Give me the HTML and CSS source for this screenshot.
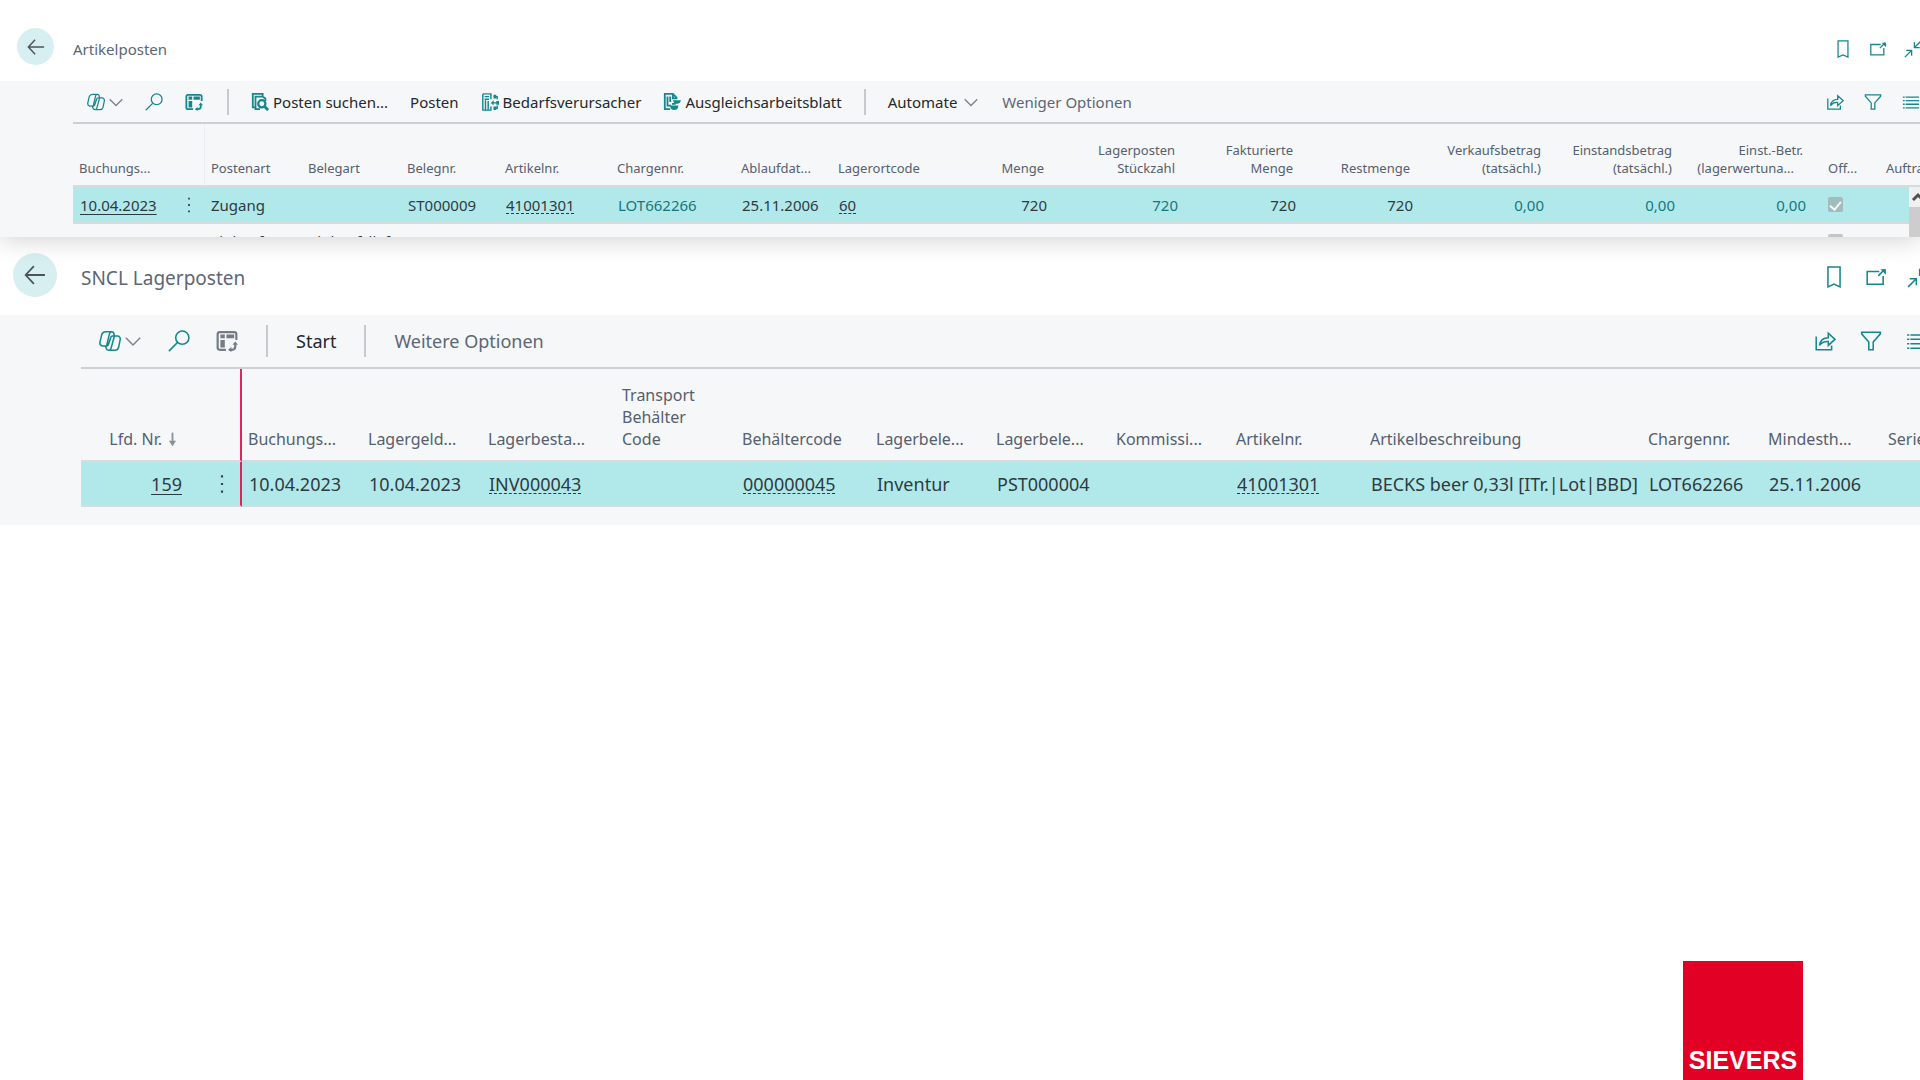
FILE: index.html
```html
<!DOCTYPE html>
<html lang="de">
<head>
<meta charset="utf-8">
<meta name="viewport" content="width=device-width, initial-scale=1">
<title>Artikelposten</title>
<link rel="stylesheet" href="styles.css">
</head>
<body>
<svg class="sprite" aria-hidden="true">
  <symbol id="i-back" viewBox="0 0 20 20"><path d="M19 10H2M9 2L1.500 10L9 18"/></symbol>
  <symbol id="i-copilot" viewBox="0 0 20 20"><path d="M6 1.500H11.500Q13.300 1.500 13.600 3.500L14 5.500H17Q19.800 6 19.200 9L17.800 16Q17 18.500 14.500 18.500H9Q7 18.500 6.500 16.500L6 14.500H3Q.4 14 .9 11L2.500 4Q3.500 1.500 6 1.500ZM14 5.500H12.500Q11 5.500 10.600 7L8.500 13.500Q8.200 14.500 7 14.500H6M11.500 1.500Q10 1.500 9.500 3.500L7 14M9 18.500Q10.500 18.500 11 16.500L14 5.500"/></symbol>
  <symbol id="i-chevron" viewBox="0 0 20 20"><path d="M1 6L10 15L19 6"/></symbol>
  <symbol id="i-search" viewBox="0 0 20 20"><circle cx="13" cy="7" r="6"/><path d="M8.500 11.500L.8 19.200"/></symbol>
  <symbol id="i-grid" viewBox="0 0 20 20"><path d="M18.500 9V4Q18.500 2 16.500 2H3.500Q1.500 2 1.500 4V16Q1.500 18 3.500 18H9M12 18H14.500Q17.500 18 17.500 15V13"/><path class="fill" d="M4 4H8V7.500H4ZM9.500 4H16.500V7.500H9.500ZM4 9H8V16H4ZM11 18L14 15.500V20ZM17.500 10.500L20 13.500H15Z"/></symbol>
  <symbol id="i-find" viewBox="0 0 20 20"><path stroke-width="2" d="M4 16H2V1H13V3M16 9V6L13 4H5V18H10"/><circle cx="12" cy="12" r="4" stroke-width="2.500"/><path stroke-width="3" d="M15 15L19 19"/></symbol>
  <symbol id="i-demand" viewBox="0 0 20 20"><path stroke-width="1.600" d="M2 1H11V7M2 1V19H11V15M5 8V19M8 9V19M4 4H9M4 7H9M12 11H18M14 4H18V7M14 17H18V14"/><path class="fill" d="M11 11L14 8V14ZM14 2H17V6H14ZM14 15H17V19H14ZM17 9H20V13H17Z"/></symbol>
  <symbol id="i-sheet" viewBox="0 0 20 20"><path stroke-width="2" d="M8 18H2V1H11L15 5V7M5 4V15M8 4V10M11 2V6H15M5 14H9"/><path class="fill" d="M11 8H20Q19 12 15.500 12Q12 12 11 8ZM8 14H17Q17 19 12.500 19Q8 19 8 14ZM10 11H14V13H10Z"/></symbol>
  <symbol id="i-bookmark" viewBox="0 0 20 20"><path d="M4.500 1H15.500V19L10 16.500L4.500 19Z"/></symbol>
  <symbol id="i-popout" viewBox="0 0 20 20"><path d="M13 5H2V16.500H16.500V9M12 9L18 3"/><path class="fill" d="M14 3H19V8Z"/></symbol>
  <symbol id="i-collapse" viewBox="0 0 20 20"><path d="M1 19L8 12M2.500 11.500H8.500V17.500M19 1L12 8M11.500 2.500V8.500H17.500"/></symbol>
  <symbol id="i-share" viewBox="0 0 20 20"><path d="M2 6V18H16V14M5 14Q6 7 13 7V3L19 8.500L13 14V10.500Q8 10 5 14Z"/></symbol>
  <symbol id="i-filter" viewBox="0 0 20 20"><path d="M1.500 2H18.500V3.500L12 11V18H8V11L1.500 3.500Z"/></symbol>
  <symbol id="i-list" viewBox="0 0 20 20"><path d="M1 4.500H3M4 4.500H19M1 8.500H3M4 8.500H19M1 12.500H3M4 12.500H19M1 16.500H3M4 16.500H19"/></symbol>
  <symbol id="i-dots" viewBox="0 0 20 20"><path class="fill" d="M9 2h2v2H9zM9 9h2v2H9zM9 16h2v2H9z"/></symbol>
  <symbol id="i-down" viewBox="0 0 10 20"><path stroke-width="2" d="M5 3V16"/><path class="fill" d="M1 12H9L5 18Z"/></symbol>
</svg>

<section class="panel panel-items">
  <header class="panel-head">
    <button class="back" aria-label="Zurück"><svg><use href="#i-back"/></svg></button>
    <h1>Artikelposten</h1>
    <div class="tools">
      <button aria-label="Lesezeichen"><svg><use href="#i-bookmark"/></svg></button>
      <button aria-label="In neuem Fenster öffnen"><svg><use href="#i-popout"/></svg></button>
      <button aria-label="Verkleinern"><svg><use href="#i-collapse"/></svg></button>
    </div>
  </header>
  <div class="panel-body">
    <div class="toolbar">
      <button class="copilot" aria-label="Copilot"><svg><use href="#i-copilot"/></svg><svg class="chevron"><use href="#i-chevron"/></svg></button>
      <button class="search" aria-label="Suchen"><svg><use href="#i-search"/></svg></button>
      <button class="grid" aria-label="Analyse"><svg><use href="#i-grid"/></svg></button>
      <span class="sep"></span>
      <button class="action"><svg><use href="#i-find"/></svg>Posten suchen...</button>
      <button class="action">Posten</button>
      <button class="action"><svg><use href="#i-demand"/></svg>Bedarfsverursacher</button>
      <button class="action"><svg><use href="#i-sheet"/></svg>Ausgleichsarbeitsblatt</button>
      <span class="sep"></span>
      <button class="action menu">Automate<svg class="chevron"><use href="#i-chevron"/></svg></button>
      <button class="action muted">Weniger Optionen</button>
      <div class="tools">
        <button aria-label="Teilen"><svg><use href="#i-share"/></svg></button>
        <button aria-label="Filter"><svg><use href="#i-filter"/></svg></button>
        <button aria-label="Liste"><svg><use href="#i-list"/></svg></button>
      </div>
    </div>
    <div class="list">
      <table>
        <colgroup>
          <col class="a1"><col class="a2"><col class="a3"><col class="a4"><col class="a3"><col class="a5"><col class="a6"><col class="a7"><col class="a8"><col class="a9"><col class="a10"><col class="a11"><col class="a12"><col class="a10"><col class="a10"><col class="a10"><col class="a13"><col>
        </colgroup>
        <thead>
          <tr>
            <th>Buchungs...</th><th></th><th class="divide">Postenart</th><th>Belegart</th><th>Belegnr.</th><th>Artikelnr.</th><th>Chargennr.</th><th>Ablaufdat...</th><th>Lagerortcode</th>
            <th class="num">Menge</th><th class="num">Lagerposten<br>Stückzahl</th><th class="num">Fakturierte<br>Menge</th><th class="num">Restmenge</th><th class="num">Verkaufsbetrag<br>(tatsächl.)</th><th class="num">Einstandsbetrag<br>(tatsächl.)</th><th class="num">Einst.-Betr.<br><span class="cut">(lagerwertuna...</span></th><th class="flag">Off...</th><th>Auftra</th>
          </tr>
        </thead>
        <tbody>
          <tr class="selected">
            <td><a class="key" href="#">10.04.2023</a></td><td class="more"><button aria-label="Weitere Optionen"><svg><use href="#i-dots"/></svg></button></td><td>Zugang</td><td></td><td>ST000009</td><td><a class="lookup" href="#">41001301</a></td><td><a class="drill" href="#">LOT662266</a></td><td>25.11.2006</td><td><a class="lookup" href="#">60</a></td>
            <td class="num">720</td><td class="num"><a class="drill" href="#">720</a></td><td class="num">720</td><td class="num">720</td><td class="num"><a class="drill" href="#">0,00</a></td><td class="num"><a class="drill" href="#">0,00</a></td><td class="num"><a class="drill" href="#">0,00</a></td><td class="flag"><input type="checkbox" checked disabled aria-label="Offen"></td><td></td>
          </tr>
          <tr class="next">
            <td></td><td></td><td>Einkauf</td><td>Einkaufslieferung</td><td></td><td></td><td></td><td></td><td></td><td></td><td></td><td></td><td></td><td></td><td></td><td></td><td class="flag"><input type="checkbox" checked disabled aria-label="Offen"></td><td></td>
          </tr>
        </tbody>
      </table>
      <div class="scrollbar"><svg viewBox="0 0 18 20"><path d="M4 13L9 8L14 13"/></svg><span class="thumb"></span></div>
    </div>
  </div>
</section>

<section class="panel panel-stock">
  <header class="panel-head">
    <button class="back" aria-label="Zurück"><svg><use href="#i-back"/></svg></button>
    <h1>SNCL Lagerposten</h1>
    <div class="tools">
      <button aria-label="Lesezeichen"><svg><use href="#i-bookmark"/></svg></button>
      <button aria-label="In neuem Fenster öffnen"><svg><use href="#i-popout"/></svg></button>
      <button aria-label="Verkleinern"><svg><use href="#i-collapse"/></svg></button>
    </div>
  </header>
  <div class="panel-body">
    <div class="toolbar">
      <button class="copilot" aria-label="Copilot"><svg><use href="#i-copilot"/></svg><svg class="chevron"><use href="#i-chevron"/></svg></button>
      <button class="search" aria-label="Suchen"><svg><use href="#i-search"/></svg></button>
      <button class="grid off" aria-label="Analyse"><svg><use href="#i-grid"/></svg></button>
      <span class="sep"></span>
      <button class="action">Start</button>
      <span class="sep"></span>
      <button class="action muted">Weitere Optionen</button>
      <div class="tools">
        <button aria-label="Teilen"><svg><use href="#i-share"/></svg></button>
        <button aria-label="Filter"><svg><use href="#i-filter"/></svg></button>
        <button aria-label="Liste"><svg><use href="#i-list"/></svg></button>
      </div>
    </div>
    <div class="list">
      <table>
        <colgroup>
          <col class="b1"><col class="b2"><col class="b3"><col class="b3"><col class="b4"><col class="b3"><col class="b4"><col class="b3"><col class="b3"><col class="b3"><col class="b4"><col class="b5"><col class="b3"><col class="b3"><col>
        </colgroup>
        <thead>
          <tr>
            <th class="num">Lfd. Nr.<svg class="sort"><use href="#i-down"/></svg></th><th class="freeze"></th><th>Buchungs...</th><th>Lagergeld...</th><th>Lagerbesta...</th><th>Transport<br>Behälter<br>Code</th><th>Behältercode</th><th>Lagerbele...</th><th>Lagerbele...</th><th>Kommissi...</th><th>Artikelnr.</th><th>Artikelbeschreibung</th><th>Chargennr.</th><th>Mindesth...</th><th>Serie</th>
          </tr>
        </thead>
        <tbody>
          <tr class="selected">
            <td class="num"><a class="key" href="#">159</a></td><td class="more freeze"><button aria-label="Weitere Optionen"><svg><use href="#i-dots"/></svg></button></td><td>10.04.2023</td><td>10.04.2023</td><td><a class="lookup" href="#">INV000043</a></td><td></td><td><a class="lookup" href="#">000000045</a></td><td>Inventur</td><td>PST000004</td><td></td><td><a class="lookup" href="#">41001301</a></td><td>BECKS beer 0,33l [ITr.|Lot|BBD]</td><td>LOT662266</td><td>25.11.2006</td><td></td>
          </tr>
        </tbody>
      </table>
    </div>
  </div>
</section>

<footer><div class="logo">SIEVERS</div></footer>
</body>
</html>
```
FILE: styles.css
```css
* { box-sizing: border-box; }

body {
  margin: 0;
  min-height: 100vh;
  display: flex;
  flex-direction: column;
  background: #fff;
  color: #2f3a40;
  font-family: "Noto Sans", "Open Sans", sans-serif;
  overflow-x: hidden;
}

.sprite { display: none; }

svg {
  display: block;
  flex: none;
  width: var(--icon);
  height: var(--icon);
  fill: none;
  stroke: currentColor;
  stroke-width: 1.4;
}
.fill { fill: currentColor; stroke: none; }

button {
  display: flex;
  align-items: center;
  margin: 0;
  padding: 0;
  border: 0;
  background: none;
  color: #16878d;
  font: inherit;
  white-space: nowrap;
}

/* Panels: the two pages share one layout and differ in scale */
.panel { overflow: hidden; font-size: var(--text); }

.panel-items {
  --icon: 18px;
  --title: 15px;
  --text: 15px;
  --label: 13px;
  --label-line: 18px;
  --indent: 73px;
  position: relative;
  z-index: 1;
  background: #fff;
  box-shadow: 0 0 26px rgba(0, 0, 0, .22);
}
.panel-stock {
  --icon: 22px;
  --title: 19px;
  --text: 18px;
  --label: 16px;
  --label-line: 22px;
  --indent: 81px;
}

.panel-head { display: flex; align-items: center; }
.panel-items .panel-head { padding: 28px 0 16px 17px; }
.panel-stock .panel-head { padding: 16px 0 18px 13px; }

.panel-head h1 {
  margin: 4px 0 0;
  color: #5c6675;
  font-size: var(--title);
  font-weight: 400;
  line-height: 24px;
}
.panel-stock h1 { margin-top: 6px; }

.back {
  justify-content: center;
  border-radius: 50%;
  background: #d8eff1;
  color: #4b5458;
}
.back svg { stroke-width: 1.6; }
.panel-items .back { width: 37px; height: 37px; margin-right: 19px; }
.panel-stock .back { width: 44px; height: 44px; margin-right: 24px; }

.tools { display: flex; margin-left: auto; }
.panel-head .tools { margin-top: 4px; }
.panel-items .tools { gap: 17px; margin-right: -2px; }
.panel-items .toolbar .tools { gap: 20px; margin-right: 0; }
.panel-stock .tools { gap: 20px; margin-right: -9px; }
.panel-stock .toolbar .tools { gap: 24px; margin-right: -8px; }

.panel-body { background: #f5f7f9; padding-left: var(--indent); }
.panel-stock .panel-body { padding-bottom: 18px; }

/* Toolbar */
.toolbar { display: flex; align-items: center; border-bottom: 2px solid #cdd0d3; }
.panel-items .toolbar { height: 43px; padding-left: 14px; }
.panel-stock .toolbar { height: 54px; padding-left: 18px; }

.copilot { gap: 4px; }
.copilot svg:first-child { stroke-width: 1.4; }
.chevron { width: 14px; height: 14px; color: #7d8287; stroke-width: 1.8; }
.panel-stock .chevron { width: 16px; height: 16px; }
.panel-items .search { margin-left: 22px; }
.panel-items .grid { margin-left: 22px; }
.panel-stock .search { margin-left: 27px; }
.panel-stock .grid { margin-left: 26px; }
.grid.off { color: #747c86; }
.grid svg { stroke-width: 2; }

.sep { flex: none; width: 2px; background: #c7cacd; }
.panel-items .sep { height: 26px; margin: 0 22px; }
.panel-items .grid + .sep { margin-left: 24px; }
.panel-stock .sep { height: 32px; margin: 0 28px; }

.action { gap: 4px; color: #23292d; }
.action svg { color: #16878d; }
.action .chevron { color: #7d8287; }
.action.menu { gap: 7px; }
.action + .action { margin-left: 22px; }
.action.menu + .action { margin-left: 24px; }
.action.muted { color: #5c6675; }

/* Lists */
.list { position: relative; overflow: hidden; }
.panel-items .list { height: 113px; }

table { width: 100%; table-layout: fixed; border-collapse: separate; border-spacing: 0; }

th {
  padding: 0 0 8px 6px;
  border-bottom: 2px solid #d8dbde;
  color: #56606f;
  font-size: var(--label);
  font-weight: 400;
  line-height: var(--label-line);
  text-align: left;
  vertical-align: bottom;
  white-space: nowrap;
}
.panel-items th { height: 63px; }
.panel-stock th { height: 93px; padding-bottom: 10px; }

td {
  padding: 0 0 0 7px;
  border-bottom: 2px solid #d8dbde;
  line-height: 24px;
  white-space: nowrap;
}
.panel-items td { height: 37px; }
.panel-stock td { height: 45px; }
.selected td { background: #b1e9eb; }

th.num { padding-right: 9px; text-align: right; }
td.num { padding-right: 6px; text-align: right; }
.panel-stock th:first-child { padding-right: 27px; }
.panel-stock td:first-child { padding-right: 22px; }
.divide { border-left: 1px solid #eceff2; }
.freeze { border-right: 2px solid #e0245e; }
.cut { padding-right: 9px; }
.next td { vertical-align: top; padding-top: 5px; }

th .sort { display: inline-block; width: 9px; height: 18px; margin-left: 6px; color: #8c9095; vertical-align: -3px; }

.more { padding: 0; }
.more button { width: 100%; color: #3c464b; }
.panel-stock .more button { padding-left: 7px; }

td a { color: inherit; text-decoration: none; }
td .key { text-decoration: underline 1px; text-underline-offset: 3px; }
td .lookup { text-decoration: underline dashed 1px; text-underline-offset: 2px; text-decoration-skip-ink: none; }
td .drill { color: #16777c; }

th.flag, td.flag { padding-left: 16px; }
input[type="checkbox"] {
  appearance: none;
  display: block;
  width: 15px;
  height: 15px;
  margin: 0;
  border-radius: 2px;
  background: #a3bbbd;
}
.selected input::after {
  content: "";
  display: block;
  width: 5px;
  height: 9px;
  margin: 2px auto 0;
  border: solid #f3fbfb;
  border-width: 0 2px 2px 0;
  transform: rotate(40deg);
}
.next input[type="checkbox"] { margin-top: 5px; background: #c4c6c6; }

.scrollbar {
  position: absolute;
  top: 63px;
  right: 0;
  bottom: 0;
  width: 11px;
  display: flex;
  flex-direction: column;
  overflow: hidden;
  background: #f0f0f0;
}
.scrollbar svg { width: 18px; height: 20px; stroke: #505050; stroke-width: 3; }
.thumb { flex: 1; background: #cdcdcd; }

.a1 { width: 107px; }
.a2 { width: 24px; }
.a3 { width: 98px; }
.a4 { width: 99px; }
.a5 { width: 112px; }
.a6 { width: 124px; }
.a7 { width: 97px; }
.a8 { width: 108px; }
.a9 { width: 113px; }
.a10 { width: 131px; }
.a11 { width: 118px; }
.a12 { width: 117px; }
.a13 { width: 68px; }

.b1 { width: 123px; }
.b2 { width: 38px; }
.b3 { width: 120px; }
.b4 { width: 134px; }
.b5 { width: 278px; }

/* Brand mark */
footer { margin-top: auto; display: flex; justify-content: flex-end; padding-right: 117px; }
.logo {
  width: 120px;
  height: 119px;
  display: flex;
  align-items: flex-end;
  justify-content: center;
  padding-bottom: 5px;
  background: #e20025;
  color: #fff;
  font: bold 25px/30px "Liberation Sans", Arial, sans-serif;
}
```
